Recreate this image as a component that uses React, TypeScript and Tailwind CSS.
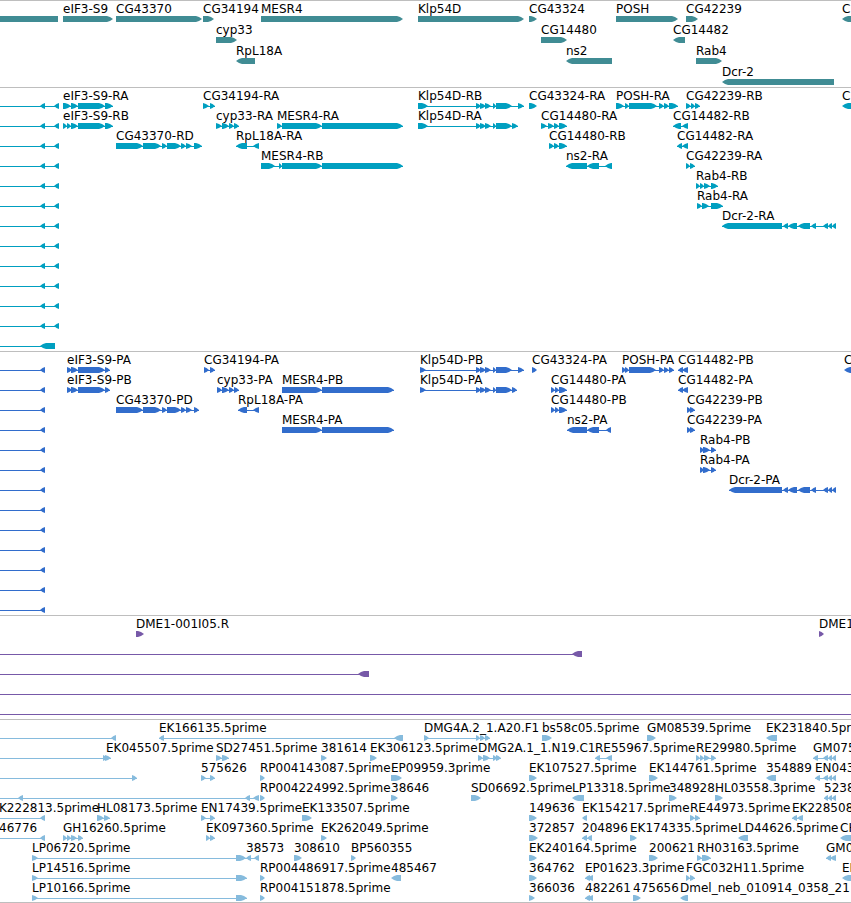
type Direction = "fwd" | "rev";

type Feature = {
  label?: string;
  // exon boundaries, flattened: start, end, start, end, ...
  spans: number[];
  dir: Direction;
  // overrides for features that run past the left edge of the view
  labelX?: number;
  lineFrom?: number;
};

type TrackData = {
  name: string;
  color: string;
  rowClass: string;
  padClass: string;
  rows: Feature[][];
};

const EDGE = 4000;

const fwd = (label: string, ...spans: number[]): Feature => ({ label, spans, dir: "fwd" });
const rev = (label: string, ...spans: number[]): Feature => ({ label, spans, dir: "rev" });
const fromLeft = (dir: Direction, spans: number[], label?: string, labelX = 0): Feature => ({
  label,
  labelX,
  spans,
  dir,
  lineFrom: 0,
});

const klpExons = [476, 481, 480, 486, 485, 491, 493, 496, 496, 512];
const dcrExons = [783, 788, 788, 797, 798, 810, 811, 816, 823, 828, 828, 832, 832, 836];
const cg43370Exons = [116, 143, 143, 161, 162, 167, 167, 181, 181, 186, 186, 192];

const genes: Feature[][] = [
  [
    { spans: [-20, 58], dir: "rev" },
    fwd("eIF3-S9", 63, 113),
    fwd("CG43370", 116, 202),
    fwd("CG34194", 203, 214),
    fwd("MESR4", 261, 403),
    fwd("Klp54D", 418, 524),
    fwd("CG43324", 529, 537),
    fwd("POSH", 616, 678),
    fwd("CG42239", 686, 698),
    rev("C", 842, 870),
  ],
  [fwd("cyp33", 216, 237), fwd("CG14480", 541, 567), rev("CG14482", 673, 685)],
  [rev("RpL18A", 236, 255), rev("ns2", 566, 612), fwd("Rab4", 696, 722)],
  [rev("Dcr-2", 722, 834)],
];

const mrnaTail = () => fromLeft("rev", [40, 45, 54, 59]);

const transcripts: Feature[][] = [
  [
    mrnaTail(),
    fwd("eIF3-S9-RA", 63, 71, 71, 78, 78, 105, 105, 113),
    fwd("CG34194-RA", 203, 209, 210, 215),
    fwd("Klp54D-RB", 418, 428, ...klpExons, 518, 524),
    fwd("CG43324-RA", 529, 537),
    fwd("POSH-RA", 616, 624, 625, 629, 629, 657, 659, 664, 664, 669, 669, 678),
    fwd("CG42239-RB", 686, 691, 691, 695, 695, 700),
    rev("C", 842, 870),
  ],
  [
    mrnaTail(),
    fwd("eIF3-S9-RB", 63, 67, 67, 71, 71, 78, 78, 105, 105, 113),
    fwd("cyp33-RA", 216, 222, 222, 229, 229, 234, 234, 239),
    fwd("MESR4-RA", 277, 282, 282, 322, 322, 403),
    fwd("Klp54D-RA", 418, 428, ...klpExons, 512, 518),
    fwd("CG14480-RA", 541, 547, 548, 554, 554, 559, 559, 567),
    rev("CG14482-RB", 673, 681, 682, 688),
  ],
  [
    mrnaTail(),
    fwd("CG43370-RD", ...cg43370Exons, 194, 202),
    rev("RpL18A-RA", 236, 247, 253, 259),
    fwd("CG14480-RB", 549, 554, 554, 559, 559, 567),
    rev("CG14482-RA", 677, 682, 682, 688),
  ],
  [
    mrnaTail(),
    fwd("MESR4-RB", 261, 275, 279, 282, 282, 322, 322, 403),
    rev("ns2-RA", 566, 587, 587, 599, 605, 612),
    fwd("CG42239-RA", 686, 690, 690, 695),
  ],
  [mrnaTail(), fwd("Rab4-RB", 696, 700, 700, 704, 704, 710, 711, 718)],
  [mrnaTail(), fwd("Rab4-RA", 697, 702, 702, 709, 711, 723)],
  [mrnaTail(), rev("Dcr-2-RA", 722, 782, ...dcrExons)],
  [mrnaTail()],
  [mrnaTail()],
  [mrnaTail()],
  [mrnaTail()],
  [mrnaTail()],
  [fromLeft("rev", [40, 55])],
];

const cdsTail = () => fromLeft("rev", [40, 45]);

const proteins: Feature[][] = [
  [
    cdsTail(),
    fwd("eIF3-S9-PA", 67, 72, 71, 78, 78, 105, 105, 110),
    fwd("CG34194-PA", 204, 209, 210, 215),
    fwd("Klp54D-PB", 420, 426, ...klpExons, 518, 524),
    fwd("CG43324-PA", 532, 537),
    fwd("POSH-PA", 622, 626, 625, 629, 629, 656, 659, 664, 664, 669, 669, 674),
    rev("CG14482-PB", 678, 683, 682, 688),
    rev("C", 844, 870),
  ],
  [
    cdsTail(),
    fwd("eIF3-S9-PB", 67, 72, 71, 78, 78, 105, 105, 110),
    fwd("cyp33-PA", 217, 222, 222, 229, 229, 234, 234, 239),
    fwd("MESR4-PB", 282, 322, 322, 394),
    fwd("Klp54D-PA", 420, 426, ...klpExons, 512, 517),
    fwd("CG14480-PA", 551, 555, 555, 559, 559, 567),
    rev("CG14482-PA", 678, 683, 682, 688),
  ],
  [
    cdsTail(),
    fwd("CG43370-PD", ...cg43370Exons, 194, 199),
    rev("RpL18A-PA", 238, 247, 253, 259),
    fwd("CG14480-PB", 551, 555, 555, 559, 559, 567),
    fwd("CG42239-PB", 687, 691, 690, 695),
  ],
  [
    cdsTail(),
    fwd("MESR4-PA", 282, 322, 322, 394),
    rev("ns2-PA", 567, 587, 587, 599, 606, 611),
    fwd("CG42239-PA", 687, 691, 690, 695),
  ],
  [cdsTail(), fwd("Rab4-PB", 700, 704, 703, 710, 711, 716)],
  [cdsTail(), fwd("Rab4-PA", 700, 704, 703, 710, 711, 716)],
  [cdsTail(), rev("Dcr-2-PA", 729, 782, ...dcrExons)],
  [cdsTail()],
  [cdsTail()],
  [cdsTail()],
  [cdsTail()],
  [cdsTail()],
  [cdsTail()],
];

const bacEnds: Feature[][] = [
  [fwd("DME1-001I05.R", 136, 144), fwd("DME1", 819, 824)],
  [fromLeft("rev", [572, 582])],
  [fromLeft("rev", [358, 369])],
  [fromLeft("fwd", [EDGE, EDGE])],
  [fromLeft("fwd", [EDGE, EDGE])],
];

const ests: Feature[][] = [
  [
    fromLeft("rev", [111, 116]),
    rev("EK166135.5prime", 159, 164, 394, 403),
    fwd("DMG4A.2_1.A20.F1", 424, 429, 476, 480, 480, 485, 485, 490),
    fwd("bs58c05.5prime", 542, 552),
    fwd("GM08539.5prime", 647, 656),
    rev("EK231840.5prime", 766, 777),
  ],
  [
    fromLeft("fwd", [103, 107, 105, 111], "EK045507.5prime", 106),
    fwd("SD27451.5prime", 216, 222, 222, 229),
    fwd("381614", 321, 327),
    fwd("EK306123.5prime", 370, 377),
    fwd("DMG2A.1_1.N19.C1", 478, 483, 483, 490, 493, 497, 496, 501),
    rev("RE55967.5prime", 595, 600, 606, 612),
    fwd("RE29980.5prime", 696, 700, 700, 704, 704, 710, 711, 716),
    rev("GM075", 813, 818, 823, 828, 828, 832, 832, 836),
  ],
  [
    fromLeft("fwd", [132, 137]),
    fwd("575626", 201, 206, 210, 215),
    fwd("RP004143087.5prime", 260, 265),
    fwd("EP09959.3prime", 391, 402),
    fwd("EK107527.5prime", 529, 537),
    fwd("EK144761.5prime", 649, 658),
    rev("354889", 766, 776),
    rev("EN043", 815, 820, 823, 828, 828, 832, 832, 836),
  ],
  [
    fromLeft("rev", [18, 23, 245, 250, 253, 259]),
    fwd("RP004224992.5prime", 260, 265),
    fwd("38646", 391, 398),
    fwd("SD06692.5prime", 471, 481),
    rev("LP13318.5prime", 572, 584),
    fwd("348928", 669, 677),
    fwd("HL03558.3prime", 715, 723),
    rev("5238", 824, 828, 828, 832, 832, 836),
  ],
  [
    fromLeft("rev", [40, 45], "K222813.5prime", -1),
    fwd("HL08173.5prime", 97, 104, 104, 110),
    fwd("EN17439.5prime", 201, 206, 210, 215),
    fwd("EK133507.5prime", 302, 312),
    fwd("149636", 529, 537),
    rev("EK154217.5prime", 582, 587),
    fwd("RE44973.5prime", 690, 695, 695, 700),
    rev("EK228508", 792, 797, 797, 803),
  ],
  [
    fromLeft("rev", [40, 45], "46776", -1),
    fwd("GH16260.5prime", 63, 67, 67, 71, 71, 77, 78, 83),
    fwd("EK097360.5prime", 206, 210, 210, 215),
    fwd("EK262049.5prime", 321, 327),
    fwd("372857", 529, 538),
    rev("204896", 582, 587, 587, 592),
    fwd("EK174335.5prime", 630, 637),
    rev("LD44626.5prime", 738, 748),
    rev("CH", 840, 870),
  ],
  [
    fwd("LP06720.5prime", 32, 38, 236, 246),
    rev("38573", 246, 251, 254, 259),
    fwd("308610", 294, 302),
    fwd("BP560355", 351, 356),
    fwd("EK240164.5prime", 529, 537),
    fwd("200621", 649, 658),
    fwd("RH03163.5prime", 697, 702, 702, 711),
    rev("GM0", 826, 831, 830, 836),
  ],
  [
    fwd("LP14516.5prime", 32, 38, 236, 247),
    fwd("RP004486917.5prime", 260, 265),
    rev("485467", 391, 401),
    fwd("364762", 529, 537),
    rev("EP01623.3prime", 585, 590, 588, 593),
    fwd("FGC032H11.5prime", 686, 690, 690, 695),
    rev("EI", 842, 870),
  ],
  [
    fwd("LP10166.5prime", 32, 38, 236, 247),
    fwd("RP004151878.5prime", 260, 265),
    fwd("366036", 529, 535),
    rev("482261", 585, 590, 588, 593),
    fwd("475656", 633, 641),
    rev("Dmel_neb_010914_0358_21", 680, 688),
  ],
];

const tracks: TrackData[] = [
  { name: "Genes", color: "text-[#408c94]", rowClass: "h-[21px]", padClass: "pb-0.5", rows: genes },
  { name: "Transcripts", color: "text-[#009fc0]", rowClass: "h-5", padClass: "pb-[3px]", rows: transcripts },
  { name: "Proteins", color: "text-[#326dcc]", rowClass: "h-5", padClass: "pb-[3px]", rows: proteins },
  { name: "BAC ends", color: "text-[#7759a8]", rowClass: "h-5", padClass: "pb-[3px]", rows: bacEnds },
  { name: "ESTs", color: "text-[#86bbdd]", rowClass: "h-5", padClass: "pb-0.5", rows: ests },
];

// a bar that narrows gently and then closes to a point
function exonPoints(start: number, end: number, dir: Direction) {
  const tip = Math.min(6, end - start);
  const tail = dir === "fwd" ? start : end;
  const point = dir === "fwd" ? end : start;
  const back = dir === "fwd" ? -1 : 1;
  const neck = point + back * tip;
  const cheek = point + back * (tip / 2);
  return `${tail},0 ${neck},0 ${cheek},1 ${point},3 ${cheek},5 ${neck},6 ${tail},6`;
}

function Glyph({ feature }: { feature: Feature }) {
  const { spans, dir, lineFrom } = feature;
  const from = lineFrom ?? spans[0];
  const to = spans[spans.length - 1];
  const exons: [number, number][] = [];
  for (let i = 0; i < spans.length; i += 2) exons.push([spans[i], spans[i + 1]]);

  return (
    <g>
      {(exons.length > 1 || lineFrom !== undefined) && (
        <rect x={from} y={3} width={to - from} height={1} />
      )}
      {exons.map(([start, end], i) => (
        <polygon key={i} points={exonPoints(start, end, dir)} />
      ))}
    </g>
  );
}

function Track({ track }: { track: TrackData }) {
  return (
    <section
      aria-label={track.name}
      className={`border-t border-[#bebebe] ${track.padClass} ${track.color}`}
    >
      {track.rows.map((row, i) => (
        <div key={i} className={`relative flex flex-col ${track.rowClass}`}>
          <div className="h-[15px] shrink-0">
            {row.map(
              (f, j) =>
                f.label && (
                  <span
                    key={j}
                    className="absolute top-0 whitespace-nowrap text-xs text-black"
                    style={{ left: f.labelX ?? f.spans[0] }}
                  >
                    {f.label}
                  </span>
                ),
            )}
          </div>
          <svg className="h-1.5 w-full shrink-0 fill-current" aria-hidden="true">
            {row.map((f, j) => (
              <Glyph key={j} feature={f} />
            ))}
          </svg>
        </div>
      ))}
    </section>
  );
}

export default function App() {
  return (
    <main className="w-full overflow-hidden border-b border-[#bebebe] bg-white font-['DejaVu_Sans',sans-serif]">
      {tracks.map((t) => (
        <Track key={t.name} track={t} />
      ))}
    </main>
  );
}
